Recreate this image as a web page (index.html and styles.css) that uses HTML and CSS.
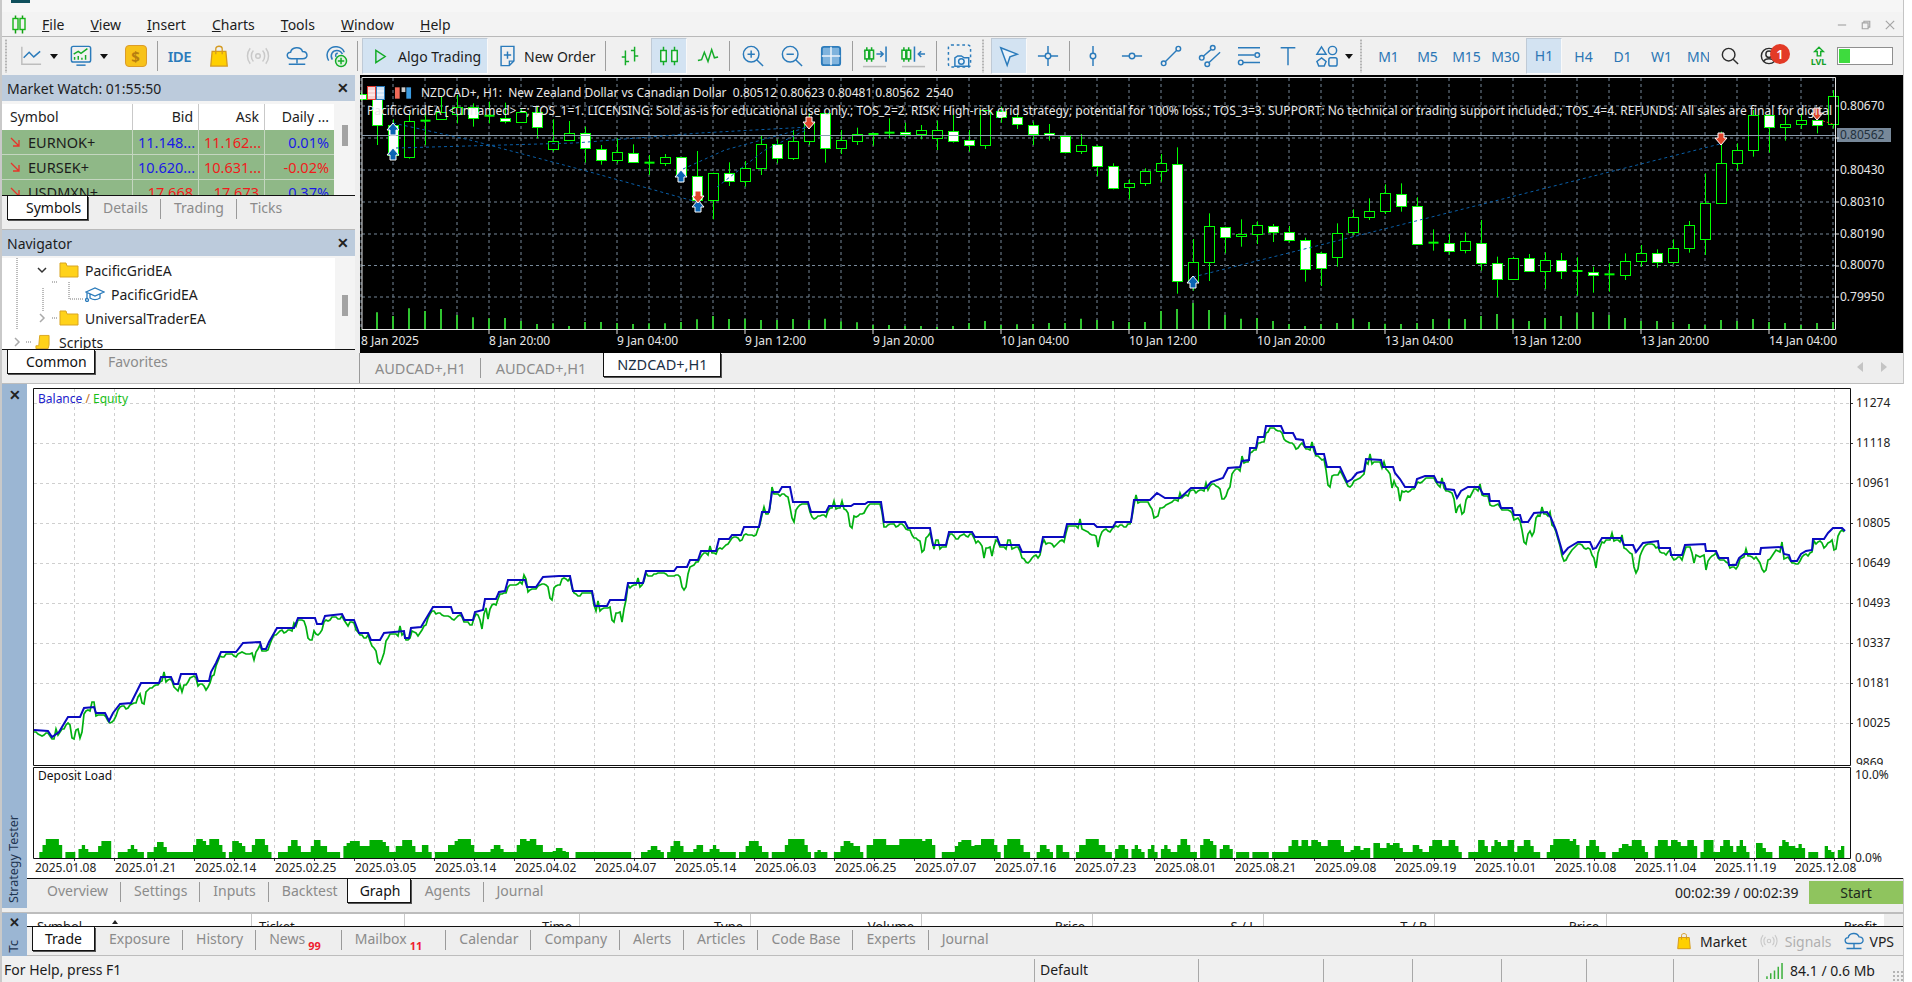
FILE: index.html
```html
<!DOCTYPE html>
<html lang="en">
<head>
<meta charset="utf-8">
<title>MetaTrader 5</title>
<link rel="stylesheet" href="styles.css">
</head>
<body>
<div class="app">
  <div class="titlebar"><i class="title-mark"></i></div>
  <div class="menubar">
    <svg class="logo" viewBox="0 0 14 18"><path d="M3.5 0v18M10.5 0v18" class="logo-w"/><rect x="1" y="3" width="5" height="11" class="logo-b"/><rect x="8" y="3" width="5" height="11" class="logo-b"/></svg>
    <nav class="menu">
      <span><u>F</u>ile</span><span><u>V</u>iew</span><span><u>I</u>nsert</span><span><u>C</u>harts</span><span><u>T</u>ools</span><span><u>W</u>indow</span><span><u>H</u>elp</span>
    </nav>
    <div class="winctl">
      <svg viewBox="0 0 12 12"><path d="M1 6h10"/></svg>
      <svg viewBox="0 0 12 12"><path d="M1.5 3.5h7v7h-7zM3.5 3.5v-2h7v7h-2"/></svg>
      <svg viewBox="0 0 12 12"><path d="M1 1l10 10M11 1L1 11"/></svg>
    </div>
  </div>

  <div class="toolbar">
    <i class="grip g-first"></i>
    <div class="tb tb-dd first-dd">
      <svg class="ic" viewBox="0 0 24 22"><path d="M2 1v19h21" class="s-grey"/><path d="M4 13l6-6 5 5 7-6" class="s-blue"/></svg><i class="caret"></i>
    </div>
    <div class="tb tb-dd">
      <svg class="ic" viewBox="0 0 24 24"><rect x="1.500" y="1.500" width="21" height="17" rx="2" class="s-blue"/><path d="M7 22h10" class="s-blue"/><path d="M4 10l5-3 3 2 7-5" class="s-green"/><path d="M5 16v-3M9 16v-4M13 16v-2M17 16v-5" class="s-green"/></svg><i class="caret"></i>
    </div>
    <div class="tb tb-dollar"><span class="dollar">$</span></div>
    <i class="sep"></i>
    <div class="tb tb-ide">IDE</div>
    <div class="tb"><svg class="ic" viewBox="0 0 20 24"><path d="M2.500 7h15l1.500 16H1z" class="bag"/><path d="M6.500 10V4c0-3.500 7-3.500 7 0v6" class="bag-h"/></svg></div>
    <div class="tb"><svg class="ic" viewBox="0 0 24 20"><circle cx="12" cy="10" r="2.500" class="s-lgrey"/><path d="M7 4c-3 3-3 9 0 12M17 4c3 3 3 9 0 12M3.500 1.500c-4 5-4 12 0 17M20.500 1.500c4 5 4 12 0 17" class="s-lgrey"/></svg></div>
    <div class="tb"><svg class="ic" viewBox="0 0 24 24"><path d="M6 15c-6 0-6-7-1-7 1-6 11-7 13-1 6 0 7 8 0 8z" class="s-blue"/><path d="M12 15v5M3 21h18" class="s-blue"/></svg></div>
    <div class="tb"><svg class="ic" viewBox="0 0 24 24"><path d="M4 17C-1 8 6 1 13 2c4 .5 7 3 8 6M8 16c-3-5 0-10 5-10 3 0 5 2 6 4M12 13c-1-3 0-4 2-4" class="s-blue"/><circle cx="17.500" cy="17.500" r="6" class="plus-c"/><path d="M17.500 14v7M14 17.500h7" class="s-green"/></svg></div>
    <i class="sep"></i>
    <button class="tb-wide algo on"><svg class="ic-sm" viewBox="0 0 14 16"><path d="M2 1.500l10 6.500-10 6.500z" class="s-green"/></svg><span>Algo Trading</span></button>
    <button class="tb-wide order"><svg class="ic" viewBox="0 0 18 24"><path d="M2 1.500h14v16l-5 5H2z" class="s-blue"/><path d="M9 7v8M5 11h8" class="s-blue"/><path d="M11 22.500v-5h5" class="fold"/></svg><span>New Order</span></button>
    <i class="sep"></i>
    <div class="tb tb-bars"><svg class="ic" viewBox="0 0 24 24"><path d="M7 6v16M3 13h4M7 18h4M17 2v16M13 6h4M17 12h4" class="s-green"/></svg></div>
    <div class="tb tb-on tb-candle on"><svg class="ic" viewBox="0 0 24 24"><path d="M6 2v20M18 2v20" class="s-green"/><rect x="3" y="6" width="6" height="12" class="candle-i"/><rect x="15" y="6" width="6" height="12" class="candle-i"/></svg></div>
    <div class="tb"><svg class="ic" viewBox="0 0 24 18"><path d="M1 14l4-1 3-8 4 10 4-13 3 9 4-1" class="s-green"/></svg></div>
    <i class="sep sep-r3"></i>
    <div class="tb"><svg class="ic" viewBox="0 0 24 24"><circle cx="10" cy="10" r="8.500" class="s-blue"/><path d="M16 16l7 7M10 6v8M6 10h8" class="s-blue"/></svg></div>
    <div class="tb"><svg class="ic" viewBox="0 0 24 24"><circle cx="10" cy="10" r="8.500" class="s-blue"/><path d="M16 16l7 7M6 10h8" class="s-blue"/></svg></div>
    <div class="tb"><svg class="ic" viewBox="0 0 24 24"><rect x="2" y="2" width="20" height="20" rx="2.500" class="grid-i"/><path d="M12 2v20M2 12h20" class="s-blue-w"/></svg></div>
    <i class="sep"></i>
    <div class="tb"><svg class="ic-w" viewBox="0 0 26 24"><path d="M5 3v15M2 7h3M5 13h3M10 3v15" class="s-green"/><rect x="3" y="6" width="4" height="9" class="candle-i"/><rect x="8" y="6" width="4" height="9" class="candle-i"/><path d="M15 10h6M19 7l3 3-3 3M25 2v16" class="s-blue"/><path d="M1 23h24" class="s-grey"/></svg></div>
    <div class="tb"><svg class="ic-w" viewBox="0 0 26 24"><path d="M3 3v15M8 3v15" class="s-green"/><rect x="1" y="6" width="4" height="9" class="candle-i"/><rect x="6" y="6" width="4" height="9" class="candle-i"/><path d="M14 2v16M25 10h-7M21 7l-3 3 3 3" class="s-blue"/><path d="M1 23h24" class="s-grey"/></svg></div>
    <i class="sep sep-3"></i>
    <div class="tb"><svg class="ic-w" viewBox="0 0 26 26"><rect x="1" y="1" width="24" height="24" rx="3" class="dash-i"/><path d="M8 24v-9l3-2h4l3 2h5v9z" class="s-blue-f"/><circle cx="15" cy="19" r="3" class="s-blue"/></svg></div>
    <i class="grip"></i>
    <div class="tb tb-on tb-cursor on"><svg class="ic" viewBox="0 0 24 24"><path d="M3 3l18 7-8 3-3 9z" class="s-blue-f"/></svg></div>
    <div class="tb"><svg class="ic" viewBox="0 0 24 24"><circle cx="12" cy="12" r="3" class="s-blue"/><path d="M12 1v8M12 15v8M1 12h8M15 12h8" class="s-blue"/></svg></div>
    <i class="sep sep-r3"></i>
    <div class="tb"><svg class="ic" viewBox="0 0 24 24"><circle cx="12" cy="12" r="3" class="s-blue"/><path d="M12 1v8M12 15v8" class="s-blue"/></svg></div>
    <div class="tb"><svg class="ic" viewBox="0 0 24 24"><circle cx="12" cy="12" r="3" class="s-blue"/><path d="M1 12h8M15 12h8" class="s-blue"/></svg></div>
    <div class="tb"><svg class="ic" viewBox="0 0 24 24"><circle cx="4" cy="20" r="2.500" class="s-blue"/><circle cx="20" cy="4" r="2.500" class="s-blue"/><path d="M6 18L18 6" class="s-blue"/></svg></div>
    <div class="tb"><svg class="ic" viewBox="0 0 24 24"><circle cx="3" cy="14" r="2.500" class="s-blue"/><circle cx="15" cy="3" r="2.500" class="s-blue"/><circle cx="9" cy="21" r="2.500" class="s-blue"/><path d="M5 12l8-7M11 19L23 8" class="s-blue"/></svg></div>
    <div class="tb"><svg class="ic" viewBox="0 0 24 24"><path d="M0 3h24M0 11h18M0 19h24" class="s-blue"/><circle cx="21" cy="11" r="2.500" class="s-blue"/><circle cx="3" cy="19" r="2.500" class="s-fill"/></svg></div>
    <div class="tb"><svg class="ic" viewBox="0 0 24 24"><path d="M4 3h16M12 3v19" class="s-blue"/></svg></div>
    <div class="tb"><svg class="ic" viewBox="0 0 24 24"><path d="M6 2l5 8H1z" class="s-blue"/><circle cx="18" cy="6" r="4.500" class="s-blue"/><path d="M6 14l5 4-2 5H3l-2-5z" class="s-blue"/><rect x="14" y="14" width="9" height="9" rx="2" class="s-blue"/></svg></div>
    <i class="caret caret-solo"></i>
    <i class="grip grip-w"></i>
    <div class="tf">M1</div><div class="tf">M5</div><div class="tf">M15</div><div class="tf">M30</div>
    <div class="tf tf-on on">H1</div>
    <div class="tf tf-gap">H4</div><div class="tf">D1</div><div class="tf">W1</div><div class="tf tf-mn">MN</div>
    <div class="tb tb-search"><svg class="ic-s" viewBox="0 0 20 20"><circle cx="8.500" cy="8.500" r="7" class="s-dark"/><path d="M13.500 13.500L19 19" class="s-dark"/></svg></div>
    <div class="tb user">
      <svg class="ic-s" viewBox="0 0 20 20"><circle cx="10" cy="10" r="8.500" class="s-dark"/><circle cx="10" cy="8" r="3.500" class="s-dark"/><path d="M4 16c2-4 10-4 12 0" class="s-dark"/></svg>
      <b class="badge">1</b>
    </div>
    <div class="lvl"><svg viewBox="0 0 16 12"><path d="M8 1l5 5h-3v5H6V6H3z" class="s-green"/></svg><span>LVL</span></div>
    <div class="meter"><i></i></div>
  </div>

  <div class="top">
    <aside class="side">
      <section class="mw">
        <header class="phead"><span>Market Watch: 01:55:50</span><b class="x">✕</b></header>
        <div class="mw-body">
          <div class="mw-table">
            <div class="mw-row mw-h"><span>Symbol</span><span class="r">Bid</span><span class="r">Ask</span><span class="r">Daily ...</span></div>
            <div class="mw-row mw-d"><span class="sym"><svg viewBox="0 0 10 10"><path d="M1 1l8 8M9 3v6H3"/></svg>EURNOK+</span><span class="r bid">11.148...</span><span class="r ask">11.162...</span><span class="r bid">0.01%</span></div>
            <div class="mw-row mw-d"><span class="sym"><svg viewBox="0 0 10 10"><path d="M1 1l8 8M9 3v6H3"/></svg>EURSEK+</span><span class="r bid">10.620...</span><span class="r ask">10.631...</span><span class="r ask">-0.02%</span></div>
            <div class="mw-row mw-d"><span class="sym"><svg viewBox="0 0 10 10"><path d="M1 1l8 8M9 3v6H3"/></svg>USDMXN+</span><span class="r ask">17.668</span><span class="r ask">17.673</span><span class="r bid">0.37%</span></div>
          </div>
          <i class="thumb thumb-mw"></i>
        </div>
        <div class="tabs tabs-side">
          <span class="tab active">Symbols</span><span class="tab">Details</span><span class="tab">Trading</span><span class="tab last">Ticks</span>
        </div>
      </section>
      <section class="nav">
        <header class="phead"><span>Navigator</span><b class="x">✕</b></header>
        <div class="tree">
          <svg class="tree-lines" viewBox="0 0 80 92"><path d="M15 0v72M41 30v24M67 24v17h14M50 24h5M50 60h5M24 84h5"/></svg>
          <div class="node n2"><svg class="chev" viewBox="0 0 10 10"><path d="M1 3l4 4 4-4"/></svg><svg class="folder" viewBox="0 0 20 16"><path d="M1 1h6l1 3h11v11H1z"/></svg>PacificGridEA</div>
          <div class="node n3"><svg class="cap" viewBox="0 0 20 16"><path d="M1 6l9-4 9 4-9 4zM5 8v4c3 2 7 2 10 0V8M2 7v6"/><circle cx="2" cy="14" r="1.500"/></svg>PacificGridEA</div>
          <div class="node n2"><svg class="chev light" viewBox="0 0 10 10"><path d="M3 1l4 4-4 4"/></svg><svg class="folder" viewBox="0 0 20 16"><path d="M1 1h6l1 3h11v11H1z"/></svg>UniversalTraderEA</div>
          <div class="node n1"><svg class="chev light" viewBox="0 0 10 10"><path d="M3 1l4 4-4 4"/></svg><svg class="folder script" viewBox="0 0 16 16"><path d="M5 1h10v10l-1 4H1v-3h3z"/></svg>Scripts</div>
          <i class="thumb thumb-nav"></i>
        </div>
        <div class="tabs tabs-nav">
          <span class="tab active">Common</span><span class="tab last">Favorites</span>
        </div>
      </section>
    </aside>

    <main class="chartpane">
      <div class="chart">
        <svg id="candles" class="chart-svg" viewBox="360 75 1544 278">
          <g class="px-axis">
            <text x="1840" y="110">0.80670</text>
            <text x="1840" y="174">0.80430</text>
            <text x="1840" y="206">0.80310</text>
            <text x="1840" y="238">0.80190</text>
            <text x="1840" y="269">0.80070</text>
            <text x="1840" y="301">0.79950</text>
          </g>
          <rect x="1837" y="128" width="54" height="14" class="px-box"/>
          <text x="1840" y="139" class="px-cur">0.80562</text>
          <g class="t-axis">
            <text x="361" y="345">8 Jan 2025</text><text x="489" y="345">8 Jan 20:00</text><text x="617" y="345">9 Jan 04:00</text><text x="745" y="345">9 Jan 12:00</text><text x="873" y="345">9 Jan 20:00</text><text x="1001" y="345">10 Jan 04:00</text><text x="1129" y="345">10 Jan 12:00</text><text x="1257" y="345">10 Jan 20:00</text><text x="1385" y="345">13 Jan 04:00</text><text x="1513" y="345">13 Jan 12:00</text><text x="1641" y="345">13 Jan 20:00</text><text x="1769" y="345">14 Jan 04:00</text>
          </g>
        </svg>
        <div class="chart-info">
          <svg class="ci" viewBox="0 0 18 14"><rect x="0.500" y="0.500" width="8" height="13" class="ci-r"/><rect x="9.500" y="0.500" width="8" height="13" class="ci-b"/><path d="M1 5h7M1 9h7M10 5h7M10 9h7" class="ci-l"/></svg>
          <svg class="ci" viewBox="0 0 19 14"><path d="M1 1h5v12H1z" class="ci-rf"/><path d="M8 1h4v5H8z" class="ci-g"/><path d="M13 1h5v12h-5z" class="ci-bf"/></svg>
          <span class="ci-t">NZDCAD+, H1:  New Zealand Dollar vs Canadian Dollar  0.80512 0.80623 0.80481 0.80562  2540</span>
        </div>
        <div class="chart-comment">PacificGridEA [&lt;unnamed&gt; =; TOS_1=1. LICENSING: Sold as-is for educational use only.; TOS_2=2. RISK: High-risk grid strategy; potential for 100% loss.; TOS_3=3. SUPPORT: No technical or trading support included.; TOS_4=4. REFUNDS: All sales are final for digital</div>
      </div>
      <div class="tabs tabs-chart">
        <span class="tab">AUDCAD+,H1</span><span class="tab last">AUDCAD+,H1</span><span class="tab active">NZDCAD+,H1</span>
        <span class="arrows"><i class="al"></i><i class="ar"></i></span>
      </div>
    </main>
  </div>

  <section class="tester">
    <div class="strip strip-t"><b class="x">✕</b><span class="vtext">Strategy Tester</span></div>
    <div class="t-body">
      <svg id="equity" class="eq-svg" viewBox="27 384 1877 494">
        <text x="38" y="403" class="lg"><tspan class="lg-b">Balance</tspan><tspan class="lg-s"> / </tspan><tspan class="lg-g">Equity</tspan></text>
        <text x="38" y="780" class="lg lg-k">Deposit Load</text>
        <g class="eq-axis">
          <text x="1856" y="407">11274</text><text x="1856" y="447">11118</text><text x="1856" y="487">10961</text><text x="1856" y="527">10805</text><text x="1856" y="567">10649</text><text x="1856" y="607">10493</text><text x="1856" y="647">10337</text><text x="1856" y="687">10181</text><text x="1856" y="727">10025</text>
          <text x="1856" y="767" class="clipt">9869</text>
          <text x="1855" y="779">10.0%</text><text x="1855" y="862">0.0%</text>
        </g>
        <g class="eq-dates">
          <text x="35" y="872">2025.01.08</text><text x="115" y="872">2025.01.21</text><text x="195" y="872">2025.02.14</text><text x="275" y="872">2025.02.25</text><text x="355" y="872">2025.03.05</text><text x="435" y="872">2025.03.14</text><text x="515" y="872">2025.04.02</text><text x="595" y="872">2025.04.07</text><text x="675" y="872">2025.05.14</text><text x="755" y="872">2025.06.03</text><text x="835" y="872">2025.06.25</text><text x="915" y="872">2025.07.07</text><text x="995" y="872">2025.07.16</text><text x="1075" y="872">2025.07.23</text><text x="1155" y="872">2025.08.01</text><text x="1235" y="872">2025.08.21</text><text x="1315" y="872">2025.09.08</text><text x="1395" y="872">2025.09.19</text><text x="1475" y="872">2025.10.01</text><text x="1555" y="872">2025.10.08</text><text x="1635" y="872">2025.11.04</text><text x="1715" y="872">2025.11.19</text><text x="1795" y="872">2025.12.08</text>
        </g>
      </svg>
      <div class="tabs tabs-tester">
        <span class="tab">Overview</span><span class="tab">Settings</span><span class="tab">Inputs</span><span class="tab last">Backtest</span><span class="tab active">Graph</span><span class="tab">Agents</span><span class="tab last">Journal</span>
        <span class="time">00:02:39 / 00:02:39</span>
        <button class="start">Start</button>
      </div>
    </div>
  </section>

  <section class="terminal">
    <div class="strip strip-b"><b class="x">✕</b><span class="vtext">Tc</span></div>
    <div class="term-body">
      <div class="thead">
        <span class="c-sym">Symbol<i class="sort"></i></span><span class="c-tic">Ticket</span><span class="c-time">Time</span><span class="c-type">Type</span><span class="c-vol">Volume</span><span class="c-pr">Price</span><span class="c-sl">S / L</span><span class="c-tp">T / P</span><span class="c-pr2">Price</span><span class="c-pro">Profit</span>
      </div>
      <div class="tabs tabs-term">
        <span class="tab active">Trade</span><span class="tab">Exposure</span><span class="tab">History</span><span class="tab">News<sup>99</sup></span><span class="tab">Mailbox<sup class="sup-m">11</sup></span><span class="tab">Calendar</span><span class="tab">Company</span><span class="tab">Alerts</span><span class="tab">Articles</span><span class="tab">Code Base</span><span class="tab">Experts</span><span class="tab last">Journal</span>
        <span class="quick">
          <svg class="q-bag" viewBox="0 0 20 24"><path d="M2.500 7h15l1.500 16H1z" class="bag"/><path d="M6.500 10V4c0-3.500 7-3.500 7 0v6" class="bag-h"/></svg><span class="q-m">Market</span>
          <svg class="q-sig" viewBox="0 0 24 20"><circle cx="12" cy="10" r="2.500" class="s-lgrey"/><path d="M7 4c-3 3-3 9 0 12M17 4c3 3 3 9 0 12M3.500 1.500c-4 5-4 12 0 17M20.500 1.500c4 5 4 12 0 17" class="s-lgrey"/></svg><span class="q-s">Signals</span>
          <svg class="q-vps" viewBox="0 0 24 24"><path d="M6 15c-6 0-6-7-1-7 1-6 11-7 13-1 6 0 7 8 0 8z" class="s-blue"/><path d="M12 15v5M3 21h18" class="s-blue"/></svg><span class="q-v">VPS</span>
        </span>
      </div>
    </div>
  </section>

  <footer class="status">
    <span class="st st-help">For Help, press F1</span>
    <span class="st st-def">Default</span>
    <span class="st st-a"></span><span class="st st-b"></span><span class="st st-c"></span><span class="st st-d"></span><span class="st st-e"></span><span class="st st-f"></span>
    <span class="st st-net"><svg viewBox="0 0 18 17"><path d="M1 17v-3M5 17v-6M9 17v-9M13 17V4M17 17V0"/></svg>84.1 / 0.6 Mb</span>
    <i class="sizegrip"></i>
  </footer>
</div>
<script src="chart.js"></script>
</body>
</html>
```
FILE: styles.css
```css
* { box-sizing: border-box; }
html, body { margin: 0; height: 100%; background: #fff; overflow: hidden; }
body { font-family: "Noto Sans", "Open Sans", sans-serif; font-size: 14px; color: #1c1c1c; }
i, b { font-style: normal; }
.app { width: 1904px; height: 982px; display: flex; flex-direction: column; background: #eeeeee; border-left: 2px solid #c9c9c9; border-right: 1px solid #c4c4c4; }

.titlebar { height: 12px; background: #f6f6f6; flex: none; }
.title-mark { display: block; width: 19px; height: 3px; margin-left: 9px; background: #0f4f5c; }
.menubar { height: 25px; display: flex; align-items: center; border-bottom: 1px solid #b9b9b9; background: #f3f3f3; flex: none; padding-top: 1px; }
.logo { width: 14px; height: 19px; margin-left: 10px; }
.logo-w { stroke: #12a012; stroke-width: 1.5; fill: none; }
.logo-b { stroke: #18b418; stroke-width: 1.4; fill: #f3f3f3; }
.menu { display: flex; gap: 26px; margin-left: 16px; }
.winctl { margin-left: auto; display: flex; gap: 14px; margin-right: 8px; }
.winctl svg { width: 10px; height: 10px; fill: none; stroke: #a5a5a5; stroke-width: 1.4; overflow: visible; }

.toolbar { height: 38px; display: flex; align-items: center; flex: none; background: #f0f0f0; }
.tb { width: 39px; height: 36px; flex: none; display: flex; align-items: center; justify-content: center; }
.on { background: #d3e3f2; border: 1px solid #bfcad6; border-right-color: #f9f9f9; border-bottom-color: #f9f9f9; }
.grip { width: 8px; height: 34px; flex: none; background: radial-gradient(circle, #b4b4b4 1px, transparent 1.2px) center top / 4px 3px repeat-y; }
.grip-w { width: 16px; }
.sep { width: 1px; height: 30px; background: #9e9e9e; margin: 0 2px; flex: none; }
.sep-r3 { margin-right: 3px; }
.sep-3 { margin: 0 3px; }
.ic { width: 22px; height: 22px; overflow: visible; }
.ic-sm { width: 13px; height: 15px; overflow: visible; margin-left: 11px; }
.ic-w { width: 25px; height: 24px; overflow: visible; }
.ic-s { width: 18px; height: 18px; overflow: visible; }
.s-blue, .s-grey, .s-green, .s-lgrey, .s-dark, .s-fill, .s-blue-f, .s-blue-w { fill: none; stroke-width: 1.6; }
.s-blue, .s-blue-f, .s-fill { stroke: #2b7bbb; }
.s-blue-w { stroke: #eef4fa; }
.s-blue-f { fill: #eaf2fa; }
.s-grey { stroke: #bdbdbd; }
.s-green { stroke: #14ac28; }
.s-lgrey { stroke: #c9c9c9; }
.s-dark { stroke: #2d2d2d; }
.s-fill { fill: #f0f0f0; }
.fold { fill: none; stroke: #2b7bbb; stroke-width: 1.4; }
.candle-i { fill: #f4f8f4; stroke: #14ac28; stroke-width: 1.6; }
.grid-i { fill: #7fb3dd; stroke: #2b7bbb; stroke-width: 2; }
.dash-i { fill: none; stroke: #2b7bbb; stroke-width: 1.6; stroke-dasharray: 3 3; }
.plus-c { fill: #dff3df; stroke: #14ac28; stroke-width: 1.6; }
.bag { fill: #ffd000; stroke: #d49a20; stroke-width: 1.4; }
.bag-h { fill: none; stroke: #d49a20; stroke-width: 1.4; }
.caret { width: 0; height: 0; border-left: 4.5px solid transparent; border-right: 4.5px solid transparent; border-top: 5px solid #111; flex: none; }
.tb-dd { width: 41px; gap: 8px; justify-content: flex-start; }
.first-dd { margin-left: 10px; margin-right: 9px; }
.tb-dollar { margin-left: 5px; }
.dollar { width: 22px; height: 22px; background: #f7c21a; border: 1px solid #dc9c2a; border-radius: 4px; color: #b77e10; font-weight: 700; font-size: 15px; line-height: 20px; text-align: center; }
.tb-ide { color: #2b7bbb; font-size: 15px; font-weight: 600; letter-spacing: -0.5px; }
.tb-wide { height: 36px; flex: none; display: flex; align-items: center; font: inherit; font-size: 14px; color: #1c1c1c; background: none; border: 0; padding: 0; }
.tb-wide.on { border: 1px solid #bfcad6; border-right-color: #f9f9f9; border-bottom-color: #f9f9f9; background: #d3e3f2; }
.algo { width: 126px; margin-left: 2px; }
.algo span { margin-left: 11px; }
.order { width: 115px; padding-left: 11px; }
.order .ic { width: 17px; }
.order span { margin-left: 8px; }
.tb-bars { margin-left: 2px; }
.tb-on { width: 36px; }
.tb-candle { margin: 0 1px 0 2px; }
.tb-cursor { margin: 0 1px 0 4px; }
.caret-solo { margin-left: -1px; }
.tf { width: 39px; flex: none; text-align: center; color: #2b76b5; font-size: 14px; }
.tf-on { width: 36px; height: 36px; line-height: 34px; margin-left: 1px; }
.tf-gap { margin-left: 2px; }
.tf-mn { width: 28px; overflow: hidden; text-align: left; padding-left: 6px; }
.tb-search { margin-left: 1px; }
.user { position: relative; }
.badge { position: absolute; left: 21px; top: 6px; width: 20px; height: 20px; border-radius: 50%; background: #e33a26; color: #fff; font-size: 13px; line-height: 20px; text-align: center; font-weight: 600; }
.lvl { width: 50px; flex: none; display: flex; flex-direction: column; align-items: center; color: #14a028; font-size: 9px; font-weight: 700; line-height: 10px; padding-left: 11px; }
.lvl svg { width: 14px; height: 11px; }
.meter { width: 56px; height: 18px; flex: none; border: 1px solid #8f8f8f; background: #fff; padding: 1px; margin-left: -1px; }
.meter i { display: block; width: 11px; height: 100%; background: #3edb3e; }

.top { height: 309px; display: flex; flex: none; border-bottom: 1px solid #bdbdbd; }
.side { width: 353px; flex: none; display: flex; flex-direction: column; }
.phead { height: 26px; background: #bccbdc; display: flex; align-items: center; justify-content: space-between; padding: 0 5px; flex: none; }
.x { font-size: 14px; font-weight: 700; color: #222; line-height: 1; width: 14px; text-align: center; margin-right: 0; }
.mw { height: 155px; display: flex; flex-direction: column; border-bottom: 1px solid #b9b9b9; flex: none; }
.mw-body { height: 94px; flex: none; position: relative; background: #f4f4f4; padding-top: 3px; overflow: hidden; }
.mw-table { width: 332px; background: #fff; }
.mw-row { display: grid; grid-template-columns: 131px 66px 66px 69px; height: 25px; line-height: 24px; }
.mw-row span { border-right: 1px solid #c9c9c9; padding: 0 5px; white-space: nowrap; overflow: hidden; }
.mw-row span:last-child { border-right: 0; }
.mw-h { height: 26px; line-height: 25px; }
.mw-h span:first-child { padding-left: 8px; }
.r { text-align: right; }
.mw-d { background: #8fb887; border-bottom: 1px solid #c4d6c0; font-size: 14.500px; }
.mw-d span { border-right-color: #c4d6c0; }
.sym { display: flex; align-items: center; padding-left: 8px !important; gap: 8px; }
.sym svg { width: 10px; height: 10px; fill: none; stroke: #e8342a; stroke-width: 1.3; flex: none; }
.bid { color: #1a1ae6; }
.ask { color: #f01c1c; }
.thumb { position: absolute; background: #a3a3a3; width: 6px; height: 21px; left: 340px; }
.thumb-mw { top: 24px; }
.thumb-nav { top: 39px; }

.tabs { display: flex; align-items: flex-start; flex: none; color: #8b8b8b; }
.tab { flex: none; height: 24px; padding: 0 13px; line-height: 24px; position: relative; white-space: nowrap; }
.tab::after { content: ""; position: absolute; right: 0; top: 3px; height: 20px; width: 1px; background: #9a9a9a; }
.tab.last::after, .tab.active::after { display: none; }
.tab.active { background: #fff; color: #111; border: 1px solid #111; border-top: 0; box-shadow: 1px 1px 0 #555; }
.tabs-side { height: 34px; border-top: 1px solid #111; padding-left: 5px; }
.tabs-nav { height: 34px; border-top: 1px solid #111; padding-left: 5px; }
.tabs-side .tab.active { padding: 0 18px; width: 81px; margin-right: 2px; }
.tabs-nav .tab.active { padding: 0 18px; width: 88px; margin-right: 0; }
.nav { flex: 1; display: flex; flex-direction: column; }
.tree { height: 93px; flex: none; position: relative; background: #f4f4f4; padding-top: 2px; overflow: hidden; }
.tree::before { content: ""; position: absolute; left: 0; top: 2px; bottom: 0; width: 333px; background: #fff; }
.tree-lines { position: absolute; left: 0; top: 2px; width: 80px; height: 92px; fill: none; stroke: #777; stroke-width: 1; stroke-dasharray: 1 1; overflow: visible; }
.node { position: relative; height: 24px; display: flex; align-items: center; white-space: nowrap; font-size: 14px; }
.n1 { padding-left: 10px; }
.n2 { padding-left: 35px; }
.n3 { padding-left: 83px; }
.chev { width: 10px; height: 10px; fill: none; stroke: #333; stroke-width: 1.5; margin-right: 12px; flex: none; }
.chev.light { stroke: #aaa; }
.n1 .chev { margin-right: 13px; }
.folder { width: 20px; height: 16px; fill: #ffd21a; stroke: #d9a520; stroke-width: 1; margin-right: 6px; flex: none; }
.folder.script { width: 15px; margin-right: 9px; }
.cap { width: 20px; height: 16px; fill: none; stroke: #2b7bbb; stroke-width: 1.3; margin-right: 6px; flex: none; }

.chartpane { flex: 1; margin-left: 5px; display: flex; flex-direction: column; min-width: 0; }
.chart { height: 278px; background: #000; position: relative; flex: none; overflow: hidden; }
.chart-svg { display: block; width: 1544px; height: 278px; }
.px-axis text, .t-axis text, .px-cur { font-size: 12px; fill: #e6e6e6; }
.px-box { fill: #778899; }
.px-cur { fill: #22303c; }
.chart-info { position: absolute; left: 7px; top: 9px; display: flex; align-items: center; color: #e8e8e8; font-size: 12px; white-space: pre; }
.ci { width: 18px; height: 14px; margin-right: 9px; flex: none; }
.ci-r { fill: #f8d0d0; stroke: #e03a30; }
.ci-b { fill: #cfe3f7; stroke: #2b7bbb; }
.ci-l { stroke: #fff; }
.ci-rf { fill: #f26a58; }
.ci-g { fill: #ccc; }
.ci-bf { fill: #3b9be0; }
.chart-comment { position: absolute; left: 7px; top: 27px; width: 1468px; overflow: hidden; color: #e8e8e8; font-size: 12px; white-space: nowrap; }
.tabs-chart { height: 30px; padding-left: 0; position: relative; border-left: 1px solid #9a9a9a; margin-left: -1px; }
.tabs-chart .tab { padding: 0 15px; height: 30px; line-height: 30px; font-size: 14.500px; }
.tabs-chart .tab::after { top: 5px; }
.tabs-chart .tab.active { height: 24px; line-height: 23px; padding: 0; text-align: center; width: 118px; margin-left: 2px; border-top: 0; color: #1b2f44; }
.arrows { position: absolute; left: 1497px; top: 9px; display: flex; gap: 18px; }
.al, .ar { width: 0; height: 0; border-top: 5px solid transparent; border-bottom: 5px solid transparent; }
.al { border-right: 6px solid #c4c4c4; }
.ar { border-left: 6px solid #c4c4c4; }

.tester { height: 529px; display: flex; flex: none; border-bottom: 1px solid #bdbdbd; }
.strip { width: 25px; flex: none; background: #9bb6d3; display: flex; flex-direction: column; align-items: center; justify-content: space-between; position: relative; }
.strip .x { margin-top: 4px; }
.strip-t { height: 524px; padding-bottom: 5px; }
.vtext { writing-mode: vertical-rl; transform: rotate(180deg); color: #1f3550; font-size: 12.500px; white-space: nowrap; margin-right: 3px; }
.t-body { flex: 1; display: flex; flex-direction: column; min-width: 0; }
.eq-svg { display: block; width: 1877px; height: 494px; background: #fff; flex: none; }
.lg { font-size: 12px; }
.lg-b { fill: #2222cc; }
.lg-s { fill: #c07020; }
.lg-g { fill: #18c018; }
.lg-k { fill: #111; }
.eq-axis text, .eq-dates text { font-size: 12px; fill: #222; }
.tabs-tester { height: 34px; border-top: 1px solid #111; padding-left: 7px; position: relative; }
.tabs-tester .tab { height: 24px; }
.tabs-tester .tab.active { padding: 0 12px; width: 64px; margin: 0 1px 0 -4px; }
.time { position: absolute; left: 1648px; top: 2px; color: #222; line-height: 24px; font-size: 14px; }
.start { position: absolute; left: 1782px; top: 2px; width: 94px; height: 23px; background: #8fc45e; border: 0; font: inherit; color: #1c2a1c; padding: 0; }

.terminal { height: 43px; display: flex; flex: none; border-bottom: 1px solid #bdbdbd; }
.strip-b { height: 43px; overflow: hidden; }
.strip-b .x { margin-top: 3px; font-size: 13px; }
.strip-b .vtext { font-size: 13px; margin-bottom: 3px; }
.term-body { flex: 1; min-width: 0; }
.thead { height: 13px; overflow: hidden; background: linear-gradient(90deg, #fff 0, #fff 1857px, #ededed 1857px); display: flex; padding-top: 0; line-height: 24px; font-size: 13px; border-top: 1px solid #bdbdbd; }
.thead span { flex: none; height: 24px; border-right: 1px solid #c9c9c9; padding: 0 7px; text-align: right; position: relative; }
.c-sym { width: 225px; text-align: left !important; padding-left: 10px !important; }
.c-tic { width: 153px; text-align: left !important; }
.c-time { width: 175px; }
.c-type { width: 171px; }
.c-vol { width: 171px; }
.c-pr { width: 171px; }
.c-sl { width: 171px; }
.c-tp { width: 171px; }
.c-pr2 { width: 172px; }
.c-pro { width: 277px; border-right: 0 !important; }
.sort { position: absolute; left: 85px; top: 6px; width: 0; height: 0; border-left: 3px solid transparent; border-right: 3px solid transparent; border-bottom: 4px solid #222; }
.tabs-term { height: 30px; border-top: 1px solid #111; padding-left: 5px; position: relative; }
.tabs-term .tab.active { padding: 0 12px; width: 63px; margin-right: 1px; }
.tabs-term .tab { padding: 0 13px; }
.tabs-term sup { color: #ef2030; font-size: 11px; font-weight: 700; position: relative; top: 6px; left: 3px; vertical-align: baseline; line-height: 0; margin-right: 11px; }
.tabs-term .sup-m { margin-right: 14px; }
.quick { position: absolute; left: 1650px; top: 2px; display: flex; align-items: center; height: 24px; color: #222; }
.q-bag { width: 14px; height: 18px; }
.q-m { margin-left: 9px; }
.q-sig { width: 18px; height: 14px; margin-left: 13px; }
.q-s { color: #b0b0b0; margin-left: 7px; }
.q-vps { width: 20px; height: 20px; margin-left: 12px; }
.q-v { margin-left: 6px; }

.status { flex: 1; display: flex; align-items: stretch; position: relative; background: #f0f0f0; padding-top: 3px; }
.st { flex: none; border-left: 1px solid #a8a8a8; padding-left: 5px; line-height: 22px; white-space: nowrap; }
.st-help { width: 1032px; border-left: 0; padding-left: 2px; }
.st-def { width: 164px; }
.st-a { width: 125px; }
.st-b { width: 89px; }
.st-c { width: 89px; }
.st-d { width: 85px; }
.st-e { width: 87px; }
.st-f { width: 85px; }
.st-net { display: flex; align-items: center; padding-left: 7px; gap: 7px; }
.st-net svg { width: 17px; height: 16px; fill: none; stroke: #3cb03c; stroke-width: 1.6; }
.sizegrip { position: absolute; right: 0; bottom: 1px; width: 11px; height: 11px; background: radial-gradient(circle, #b4b4b4 1px, transparent 1.2px) 0 0 / 4px 4px; }
.clipt { clip-path: inset(0 0 6px 0); }
```
FILE: chart.js
```js
(function () {
  var NS = 'http://www.w3.org/2000/svg';
  function el(parent, tag, attrs) {
    var n = document.createElementNS(NS, tag);
    for (var k in attrs) n.setAttribute(k, attrs[k]);
    parent.appendChild(n);
    return n;
  }

  /* ---------- price chart ---------- */
  var svg = document.getElementById('candles');
  var under = document.createElementNS(NS, 'g');
  svg.insertBefore(under, svg.firstChild);
  var i, k;
  for (k = 0; k < 47; k++) {
    var gx = 361 + 32 * k;
    el(under, 'line', { x1: gx, x2: gx, y1: 78, y2: 329, stroke: '#778899', 'stroke-dasharray': '3 3' });
  }
  [106, 138, 170, 202, 234, 265.5, 297].forEach(function (y) {
    el(under, 'line', { x1: 362, x2: 1835, y1: y, y2: y, stroke: '#778899', 'stroke-dasharray': '3 3' });
  });

  /* volumes: zoom-scale tops, base at 748 */
  var vol = [748, 697, 708, 685, 693, 687, 705, 712, 715, 714, 723, 732, 730, 738, 726, 726, 729, 732, 730, 730, 726, 718, 708, 717, 716, 720, 720, 717, 720, 716, 724, 727, 735, 735, 738, 738, 741, 738, 729, 723, 735, 733, 732, 729, 729, 716, 720, 723, 726, 726, 693, 687, 669, 690, 705, 716, 714, 723, 732, 738, 732, 729, 716, 726, 731, 732, 729, 717, 717, 717, 708, 702, 717, 723, 714, 708, 698, 696, 705, 714, 723, 723, 726, 732, 735, 720, 723, 717, 726, 729, 735, 729, 726];
  vol.forEach(function (t, n) {
    var x = 361 + 16 * n;
    el(under, 'line', { x1: x, x2: x, y1: 80 + t / 3, y2: 329, stroke: '#2fc42f', 'stroke-width': 2 });
  });

  /* candles: [wickTop, bodyTop, bodyBottom, wickBottom, white], in 3x zoom rows (page y = 80 + v / 3) */
  var c = [
    [35,43,58,62,1],[20,58,136,195,1],[118,136,225,240,1],[105,124,233,236,0],[95,122,122,195,2],[50,97,118,118,0],[45,80,100,130,0],[70,80,112,140,1],[65,107,107,130,2],[68,115,123,130,1],[85,96,125,128,0],[80,97,143,175,1],
    [118,184,208,215,0],[123,160,182,182,0],[140,160,205,248,1],[195,208,241,254,1],[175,217,242,250,0],[193,218,244,245,1],[225,248,248,285,2],[222,232,250,258,0],[232,232,290,300,1],[213,287,358,365,1],[278,278,358,418,0],[247,278,301,318,1],
    [243,263,301,320,0],[168,191,263,285,0],[178,191,232,250,1],[150,182,233,240,0],[100,125,182,195,0],[100,100,205,248,1],[150,181,206,222,0],[143,161,181,195,0],[160,162,162,197,2],[115,158,158,175,2],[128,157,164,172,1],
    [135,151,163,178,0],[122,151,176,210,0],[105,152,182,188,1],[150,181,197,215,1],[90,90,196,207,0],[80,94,112,128,1],[100,112,133,147,1],[125,134,160,195,1],[132,160,165,182,1],[165,167,214,220,1],[162,196,214,222,0],[195,197,256,288,1],
    [250,257,323,328,1],[298,310,322,358,0],[265,274,310,318,0],[222,250,274,305,0],[202,251,601,641,1],[477,545,601,632,0],[400,439,548,603,0],[440,440,469,520,1],[418,463,469,500,0],[424,436,463,492,0],[432,437,454,486,1],[438,455,478,488,1],
    [473,479,565,605,1],[515,518,562,618,1],[430,458,529,560,0],[388,412,458,465,0],[355,394,412,420,0],[313,340,394,402,0],[310,341,376,395,1],[352,377,490,492,1],[448,488,488,512,2],[462,488,511,524,1],[457,484,512,520,0],
    [420,488,547,572,1],[530,548,595,652,1],[530,533,595,597,0],[522,533,571,575,1],[517,539,571,627,0],[519,539,571,597,1],[532,573,573,647,2],[560,575,583,638,1],[550,583,583,635,2],[520,542,584,600,0],[495,518,542,560,0],[508,518,544,563,1],
    [478,503,545,552,0],[423,434,502,518,0],[280,368,475,525,0],[155,248,368,368,0],[190,209,247,272,0],[90,104,209,230,0],[100,104,139,218,1],[100,131,139,182,0],[100,119,131,147,0],[100,119,133,160,1],[30,48,132,145,0]
  ];
  var g = el(svg, 'g', { stroke: '#00ff00', fill: 'none' });
  function py(v) { return 80 + v / 3; }
  c.forEach(function (d, n) {
    var x = 361 + 16 * n + 0.5;
    el(g, 'line', { x1: x, x2: x, y1: py(d[0]), y2: py(d[3]) });
    if (d[4] === 2) {
      el(g, 'line', { x1: x - 5, x2: x + 5, y1: py(d[1]), y2: py(d[1]), 'stroke-width': 2 });
    } else {
      el(g, 'rect', { x: x - 5, y: Math.round(py(d[1])) + 0.5, width: 10, height: Math.max(2, Math.round((d[2] - d[1]) / 3)), fill: d[4] ? '#fff' : '#000' });
    }
  });
  /* frame */
  el(svg, 'path', { d: 'M362 329.500V77.500H1835.500V329.500H362', fill: 'none', stroke: '#e6e6e6' });
  for (k = 1; k < 12; k++) {
    var tx = 361 + 128 * k;
    el(svg, 'line', { x1: tx, x2: tx, y1: 329, y2: 334, stroke: '#e6e6e6' });
  }
  [106, 138, 170, 202, 234, 266, 297].forEach(function (y) {
    el(svg, 'line', { x1: 1835, x2: 1839, y1: y, y2: y, stroke: '#e6e6e6' });
  });
  el(svg, 'line', { x1: 362, x2: 1835, y1: 135.500, y2: 135.500, stroke: '#8b9dad' });

  /* trade links */
  [
    [393, 123, 470, 140, 590, 172, 697, 202],
    [396, 148, 575, 143, 700, 133, 809, 127],
    [683, 169, 725, 150, 809, 127],
    [717, 187, 765, 150, 806, 130],
    [1193, 277, 1400, 225, 1720, 144]
  ].forEach(function (p) {
    el(svg, 'polyline', { points: p.join(' '), fill: 'none', stroke: '#0a5fa8', 'stroke-dasharray': '3 3' });
  });
  el(svg, 'line', { x1: 1823, y1: 121, x2: 1833, y2: 124, stroke: '#e0452a', 'stroke-dasharray': '2 2' });

  function arrow(x, y, up) {
    var pts = up
      ? [x, y - 7, x + 6, y, x + 3, y, x + 3, y + 5, x - 3, y + 5, x - 3, y, x - 6, y]
      : [x, y + 7, x + 6, y, x + 3, y, x + 3, y - 5, x - 3, y - 5, x - 3, y, x - 6, y];
    el(svg, 'polygon', { points: pts.join(' '), fill: up ? '#0a64b4' : '#e0452a', stroke: '#fff', 'stroke-width': 1 });
  }
  [[393, 130], [393, 155], [681, 177], [698, 207], [1193, 283]].forEach(function (a) { arrow(a[0], a[1], true); });
  [[698, 196], [809, 122], [1721, 138], [1817, 113]].forEach(function (a) { arrow(a[0], a[1], false); });

  /* ---------- equity chart ---------- */
  var eq = document.getElementById('equity');
  var eu = document.createElementNS(NS, 'g');
  eq.insertBefore(eu, eq.firstChild);
  for (k = 0; k < 45; k++) {
    var ex = 74.500 + 40 * k;
    el(eu, 'line', { x1: ex, x2: ex, y1: 389, y2: 858, stroke: '#cfcfcf', 'stroke-dasharray': '3 3' });
    el(eu, 'line', { x1: ex, x2: ex, y1: 858, y2: 861, stroke: '#333' });
  }
  for (k = 0; k < 9; k++) {
    var ey = 403.500 + 40 * k;
    el(eu, 'line', { x1: 34, x2: 1850, y1: ey, y2: ey, stroke: '#cfcfcf', 'stroke-dasharray': '3 3' });
    el(eu, 'line', { x1: 1850, x2: 1853, y1: ey, y2: ey, stroke: '#333' });
  }

  var start = [[34,730],[48,731],[52,737],[59,732],[68,717],[80,717],[84,708],[94,707],[96,713],[105,713],[109,721],[113,713],[120,704],[131,703],[134,697],[141,683],[159,683],[161,677],[171,677],[174,684],[178,684],[181,674],[196,674],[198,681],[209,681],[211,672],[216,663],[221,652],[236,652],[243,643],[260,642],[262,649],[266,649],[269,642],[277,628],[294,628],[298,618],[315,618],[317,624],[322,624],[325,616],[342,614],[345,620],[354,620],[359,633],[368,633],[371,640],[380,640],[384,633],[404,631],[405,638],[409,638],[411,628],[421,627],[433,607],[451,607],[453,613],[461,613],[464,620],[473,620],[475,612],[483,610],[485,599],[496,599],[499,592],[505,591],[508,580],[525,580],[527,587],[536,587],[543,577],[559,576]];
  var midRaw = [[573,591],[584,591],[595,606],[610,600],[628,583],[646,571],[662,571],[677,567],[690,560],[701,551],[719,539],[732,535],[744,527],[762,512],[772,492],[782,487],[793,502],[811,512],[829,506],[854,504],[868,502],[884,522],[908,528],[933,545],[949,532],[975,537],[1000,545],[1022,552],[1043,537],[1067,524],[1097,527],[1116,522],[1134,500],[1150,500]];
  var mid = [];
  var prev = start[start.length - 1];
  midRaw.forEach(function (p) {
    if (p[0] - 3 > prev[0]) mid.push([p[0] - 3, prev[1]]);
    mid.push(p);
    prev = p;
  });
  var end = [[1157,493],[1165,498],[1180,498],[1191,488],[1206,488],[1211,482],[1223,478],[1228,468],[1240,467],[1242,461],[1249,460],[1250,448],[1256,448],[1258,437],[1264,437],[1266,426],[1281,426],[1284,433],[1293,433],[1296,439],[1303,440],[1305,447],[1314,447],[1316,454],[1324,454],[1327,467],[1340,467],[1347,482],[1352,479],[1357,473],[1364,471],[1366,459],[1381,460],[1383,467],[1393,467],[1395,473],[1400,479],[1405,487],[1415,487],[1417,479],[1425,476],[1434,476],[1437,482],[1444,483],[1446,489],[1454,490],[1457,498],[1461,491],[1468,487],[1479,487],[1483,494],[1489,494],[1490,501],[1499,501],[1501,508],[1512,508],[1514,515],[1520,515],[1522,522],[1528,522],[1534,513],[1547,512],[1551,518],[1556,530],[1563,554],[1568,548],[1578,542],[1590,542],[1593,549],[1596,548],[1602,538],[1621,538],[1624,545],[1633,545],[1636,552],[1643,543],[1658,541],[1659,548],[1670,548],[1671,555],[1682,555],[1685,545],[1705,544],[1706,551],[1716,551],[1719,558],[1728,558],[1729,565],[1736,565],[1739,558],[1744,554],[1760,554],[1761,548],[1782,547],[1784,554],[1789,555],[1791,561],[1797,561],[1801,554],[1806,551],[1812,550],[1813,539],[1824,539],[1828,533],[1833,528],[1842,528],[1845,531]];
  var bal = start.concat(mid, end);

  function at(x) {
    for (var j = 1; j < bal.length; j++) {
      if (bal[j][0] >= x) {
        var a = bal[j - 1], b = bal[j], t = b[0] === a[0] ? 1 : (x - a[0]) / (b[0] - a[0]);
        return a[1] + (b[1] - a[1]) * t;
      }
    }
    return bal[bal.length - 1][1];
  }
  var ep = [];
  for (var x = 34; x <= 1844; x += 2) {
    var n1 = Math.sin(x * 0.145) * Math.sin(x * 0.041 + 1.3);
    var n2 = Math.sin(x * 0.53 + Math.sin(x * 0.09) * 3);
    var off = 2 + Math.max(0, n1) * 11 + Math.max(0, n2) * 3.500;
    if (n1 > 0.55 && n2 > 0.3) off += 8;
    if (n2 > 0.9 && n1 < -0.35) off = -5;
    ep.push(x + ',' + Math.round(at(x) + off));
  }
  el(eq, 'polyline', { points: ep.join(' '), fill: 'none', stroke: '#00b010', 'stroke-width': 1.7 });
  el(eq, 'polyline', { points: bal.map(function (p) { return p.join(','); }).join(' '), fill: 'none', stroke: '#0a0ac0', 'stroke-width': 2 });

  /* deposit load hills: [centre, half width, height] */
  var hills = [[51,11,19],[82,5,13],[105,9,17],[131,5,13],[159,6,16],[200,10,19],[212,8,19],[236,7,17],[259,9,19],[292,7,18],[316,8,18],[352,14,17],[375,14,18],[404,9,18],[423,4,13],[461,13,19],[496,6,13],[527,13,19],[557,7,10],[652,7,12],[675,6,17],[697,6,13],[713,5,13],[751,8,17],[791,9,19],[801,6,19],[818,3,8],[848,10,17],[879,13,19],[905,16,19],[922,16,19],[964,11,18],[985,11,19],[1011,11,19],[1042,5,13],[1058,4,13],[1091,14,19],[1120,5,13],[1135,5,13],[1150,4,13],[1164,5,13],[1182,8,19],[1207,8,19],[1224,6,13],[1292,6,18],[1303,6,18],[1315,8,18],[1332,12,18],[1356,6,12],[1372,9,15],[1392,10,15],[1415,5,13],[1435,9,18],[1450,8,18],[1480,5,18],[1495,6,18],[1508,6,18],[1525,8,18],[1558,11,19],[1570,8,19],[1590,7,18],[1623,7,14],[1635,8,18],[1660,9,18],[1675,8,18],[1690,6,18],[1707,6,18],[1725,7,18],[1740,5,18],[1758,7,15],[1784,8,18],[1798,4,14],[1826,3,12],[1841,4,12]];
  var gaps = [[36,37],[61,63],[75,77],[112,115],[142,147],[224,228],[272,275],[340,343],[430,434],[570,575],[630,638],[662,664],[735,738],[767,771],[809,812],[828,831],[862,866],[936,940],[1000,1003],[1031,1034],[1052,1055],[1070,1075],[1112,1115],[1128,1130],[1143,1145],[1157,1159],[1195,1200],[1216,1218],[1232,1234],[1248,1250],[1268,1270],[1368,1371],[1462,1468],[1540,1545],[1579,1583],[1605,1612],[1648,1652],[1695,1698],[1750,1755],[1772,1776],[1805,1808],[1818,1823],[1833,1836]];
  var bars = '';
  for (i = 0; i < 553; i++) {
    var bx = 36 + i * 3.27, h = 6;
    hills.forEach(function (m) {
      var d = Math.abs(bx - m[0]);
      if (d < m[1]) {
        var lv = d < m[1] * 0.55 ? m[2] : m[2] * 0.68;
        if (lv > h) h = lv;
      }
    });
    if (i % 11 === 7 && h > 14) h -= 2;
    gaps.forEach(function (q) { if (bx + 1 >= q[0] && bx <= q[1]) h = 0; });
    if (h > 0) bars += 'M' + bx.toFixed(1) + ' 858v-' + Math.round(h) + 'h3.300v' + Math.round(h) + 'z';
  }
  el(eq, 'path', { d: bars, fill: '#00ad00' });

  /* frames */
  el(eq, 'path', { d: 'M33.500 765.500V388.500H1850.500V765.500z', fill: 'none', stroke: '#111' });
  el(eq, 'path', { d: 'M33.500 767.500H1850.500V858.500H33.500z', fill: 'none', stroke: '#111' });
})();
```
